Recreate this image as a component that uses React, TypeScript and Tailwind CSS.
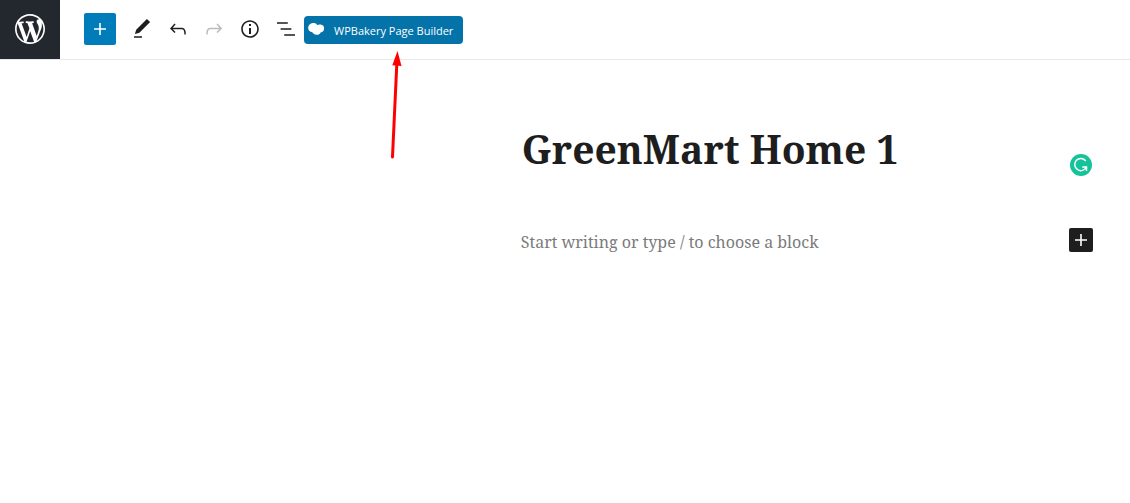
import React from "react";

type IconProps = { d: string; className?: string; viewBox?: string };

function Icon({ d, className = "size-6", viewBox = "0 0 24 24" }: IconProps) {
  return (
    <svg viewBox={viewBox} className={className} fill="currentColor" aria-hidden="true">
      <path d={d} />
    </svg>
  );
}

const paths = {
  wordpress:
    "M20 10c0-5.51-4.49-10-10-10C4.48 0 0 4.49 0 10c0 5.52 4.48 10 10 10 5.51 0 10-4.48 10-10zM7.78 15.37L4.37 6.22c.55-.02 1.17-.08 1.17-.08.5-.06.44-1.13-.06-1.11 0 0-1.45.11-2.37.11-.18 0-.37 0-.58-.01C4.12 2.69 6.87 1.11 10 1.11c2.33 0 4.45.87 6.05 2.34-.68-.11-1.65.39-1.65 1.58 0 .74.45 1.36.9 2.1.35.61.55 1.36.55 2.46 0 1.49-1.4 5-1.4 5l-3.03-8.37c.54-.02.82-.17.82-.17.5-.05.44-1.25-.06-1.22 0 0-1.44.12-2.38.12-.87 0-2.33-.12-2.33-.12-.5-.03-.56 1.2-.06 1.22l.92.08 1.26 3.41zM17.41 10c.24-.64.74-1.87.43-4.25.7 1.29 1.05 2.71 1.05 4.25 0 3.29-1.73 6.24-4.4 7.78.97-2.59 1.94-5.2 2.92-7.78zM6.1 18.09C3.12 16.65 1.11 13.53 1.11 10c0-1.3.23-2.48.72-3.59C3.25 10.3 4.67 14.2 6.1 18.09zm4.03-6.63l2.58 6.98c-.86.29-1.76.45-2.71.45-.79 0-1.57-.11-2.29-.33.81-2.38 1.62-4.74 2.42-7.1z",
  plus: "M18 11.2h-5.2V6h-1.6v5.2H6v1.6h5.2V18h1.6v-5.2H18z",
  edit: "M20.1 5.1L16.9 2 6.2 12.7l-1.3 4.4 4.5-1.3L20.1 5.1zM4 20.8h8v-1.5H4v1.5z",
  undo: "M18.3 11.7c-.6-.6-1.4-.9-2.3-.9H6.7l2.9-3.3-1.1-1-4.5 5L8.5 16l1-1-2.7-2.7H16c.5 0 .9.2 1.3.5 1 1 1 3.4 1 4.5v.3h1.5v-.2c0-1.5 0-4.3-1.5-5.7z",
  redo: "M15.6 6.5l-1.1 1 2.9 3.3H8c-.9 0-1.7.3-2.3.9-1.4 1.5-1.4 4.2-1.4 5.6v.2h1.5v-.3c0-1.1 0-3.5 1-4.5.3-.3.7-.5 1.3-.5h9.2L14.5 15l1.1 1.1 4.6-4.6-4.6-5z",
  info: "M12 3.2c-4.8 0-8.8 3.9-8.8 8.8 0 4.8 3.9 8.8 8.8 8.8 4.8 0 8.8-3.9 8.8-8.8 0-4.8-4-8.8-8.8-8.8zm0 16c-4 0-7.2-3.3-7.2-7.2C4.8 8 8 4.8 12 4.8s7.2 3.3 7.2 7.2c0 4-3.2 7.2-7.2 7.2zM11 17h2v-6h-2v6zm0-8h2V7h-2v2z",
  outline: "M13.8 5.2H3v1.5h10.8V5.2zm-3.6 12v1.5H21v-1.5H10.2zm7.2-6H6.6v1.5h10.8v-1.5z",
};

const tools = [
  { label: "Tools", d: paths.edit },
  { label: "Undo", d: paths.undo },
  { label: "Redo", d: paths.redo, disabled: true },
  { label: "Details", d: paths.info },
  { label: "Outline", d: paths.outline },
];

function Header() {
  return (
    <header className="flex h-15 items-stretch border-b border-[#e8e8e8]">
      <a
        href="#"
        aria-label="View Pages"
        className="flex w-15 shrink-0 items-center justify-center bg-[#23282e] pb-px text-white"
      >
        <Icon d={paths.wordpress} viewBox="-2 -2 24 24" className="size-9" />
      </a>
      <div className="flex items-center pb-px pl-6">
        <button
          type="button"
          aria-label="Add block"
          className="mr-2 flex size-8 items-center justify-center rounded-xs bg-[#007cba] text-white"
        >
          <Icon d={paths.plus} />
        </button>
        {tools.map((tool) => (
          <button
            key={tool.label}
            type="button"
            aria-label={tool.label}
            disabled={tool.disabled}
            className="flex size-9 items-center justify-center text-[#1e1e1e] disabled:text-[#bbbbbb]"
          >
            <Icon d={tool.d} />
          </button>
        ))}
        <div className="relative mt-0.5">
          <button
            type="button"
            className="flex h-7 items-center gap-2 rounded-sm bg-[#0473aa] pr-2.5 pl-1 font-['Open_Sans',sans-serif] text-[11px] leading-4 font-medium whitespace-nowrap text-white"
          >
            <svg viewBox="0 0 18 14" className="h-3.5 w-4.5" fill="currentColor" aria-hidden="true">
              <path d="M4.800 0C6.800-.2 8.400.6 9.200 1.900c1.200-.5 2.800-.7 4.300-.2 1.700.6 2.600 1.800 2.600 3.500 0 2.400-1.500 4-3.500 4.200-.6 1.500-2.200 2.400-4.100 2.300-1.800-.1-3.300-.9-4.200-2.500C2 8.800.3 7.400.2 5.200 0 2.600 2.200.3 4.800 0z" />
            </svg>
            <span className="pt-0.5">WPBakery Page Builder</span>
          </button>
          <svg
            viewBox="0 0 12 110"
            className="absolute top-full left-1/2 mt-1.5 ml-1.5 h-27.5 w-3"
            aria-hidden="true"
          >
            <path d="M6.800 14 2.500 107" stroke="#ff0000" strokeWidth="3" strokeLinecap="round" fill="none" />
            <path d="M7.500 1 2.300 15.300 11.500 16z" fill="#ff0000" />
          </svg>
        </div>
      </div>
    </header>
  );
}

export default function App() {
  return (
    <div className="min-h-screen bg-white">
      <Header />
      <main className="mr-[37px] ml-[46%] pt-15">
        <div className="flex items-start justify-between">
          <h1 className="pt-0.5 pb-1.5 pl-0.5 font-['Noto_Serif','DejaVu_Serif',serif] text-[39px] leading-[54px] font-bold whitespace-nowrap text-[#1e1e1e]">
            GreenMart Home 1
          </h1>
          <button
            type="button"
            aria-label="Grammarly"
            className="mt-8.5 mr-px size-[22px] shrink-0 rounded-full bg-[#15c39a] text-white"
          >
            <svg
              viewBox="0 0 22 22"
              className="size-[22px]"
              fill="none"
              stroke="currentColor"
              strokeWidth="1.500"
              aria-hidden="true"
            >
              <path d="M15.800 7A6.100 6.100 0 1 0 16.500 12.800M12.300 13.100H16.500V17" />
            </svg>
          </button>
        </div>
        <div className="mt-11 flex items-center justify-between">
          <input
            type="text"
            aria-label="Block content"
            placeholder="Start writing or type / to choose a block"
            className="h-7 min-w-0 grow pt-1 pl-px font-['Noto_Serif','DejaVu_Serif',serif] text-base leading-6 outline-none placeholder:text-[#7b7b7b]"
          />
          <button
            type="button"
            aria-label="Add block"
            className="flex size-6 shrink-0 items-center justify-center rounded-xs bg-[#1e1e1e] text-white"
          >
            <Icon d={paths.plus} />
          </button>
        </div>
      </main>
    </div>
  );
}
